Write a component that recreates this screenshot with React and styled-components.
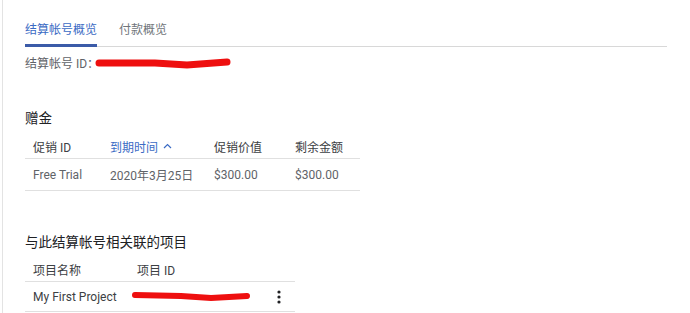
import React from "react";
import styled, { createGlobalStyle } from "styled-components";

const GlobalStyle = createGlobalStyle`
  html, body {
    margin: 0;
    padding: 0;
    background: #fff;
  }
  body {
    font-family: Roboto, "Noto Sans CJK SC", sans-serif;
    color: #5f6368;
  }
`;

const Page = styled.div`
  width: 690px;
  height: 313px;
  overflow: hidden;
  box-sizing: border-box;
  padding-left: 2px;
`;

const Panel = styled.div`
  height: 100%;
  border-left: 1px solid #e3e3e3;
  padding: 0 23px 0 22px;
`;

const Tabs = styled.div`
  display: flex;
  gap: 22px;
  padding-top: 21px;
  border-bottom: 1px solid #d8d8d8;
  width: 642px;
`;

const Tab = styled.div`
  font-size: 12px;
  line-height: 18px;
  padding-bottom: 5px;
  margin-bottom: -1px;
  color: ${(p) => (p.$active ? "#3b6bc4" : "#70757a")};
  border-bottom: 3px solid ${(p) => (p.$active ? "#3b5ba8" : "transparent")};
`;

const IdLine = styled.div`
  display: flex;
  align-items: center;
  font-size: 12px;
  margin-top: 6px;
  height: 18px;
  color: #5f6368;
`;

const Heading = styled.div`
  font-size: 13.5px;
  color: #202124;
  margin-top: ${(p) => p.$top}px;
  line-height: 18px;
`;

const Table = styled.div`
  width: ${(p) => p.$width}px;
  margin-top: ${(p) => p.$top}px;
`;

const Row = styled.div`
  display: grid;
  grid-template-columns: ${(p) => p.$cols};
  align-items: center;
  padding-left: 8px;
  height: ${(p) => p.$h}px;
  border-bottom: 1px solid #e0e0e0;
  font-size: 12px;
  color: ${(p) => (p.$head ? "#3c4043" : "#5f6368")};
`;

const SortCell = styled.span`
  color: #3b6bc4;
  display: flex;
  align-items: center;
  gap: 5px;
`;

const DarkCell = styled.span`
  color: #3c4043;
`;

const Redacted = styled.span`
  display: flex;
  align-items: center;
  margin-left: ${(p) => p.$shift}px;
`;

const Kebab = styled.span`
  display: flex;
  justify-content: center;
  color: #202124;
`;

const Scribble = ({ width, d, w = 6 }) => (
  <svg width={width} height="14" viewBox={`0 0 ${width} 14`}>
    <path d={d} stroke="#ee0f0f" strokeWidth={w} strokeLinecap="round" fill="none" />
  </svg>
);

const promoCols = "77px 104px 81px 65px";
const projCols = "104px 130px 24px";

export default function App() {
  return (
    <>
      <GlobalStyle />
      <Page>
        <Panel>
          <Tabs>
            <Tab $active>结算帐号概览</Tab>
            <Tab>付款概览</Tab>
          </Tabs>
          <IdLine>
            结算帐号 ID：
            <Redacted $shift={-4}>
              <Scribble width={136} w={7} d="M4 8 L60 8 L92 10 L132 7" />
            </Redacted>
          </IdLine>

          <Heading $top={38}>赠金</Heading>
          <Table $width={335} $top={7}>
            <Row $cols={promoCols} $h={24} $head>
              <span>促销 ID</span>
              <SortCell>
                到期时间
                <svg width="9" height="6" viewBox="0 0 9 6">
                  <path d="M1 5 L4.5 1.5 L8 5" stroke="#3b6bc4" strokeWidth="1.2" fill="none" />
                </svg>
              </SortCell>
              <span>促销价值</span>
              <span>剩余金额</span>
            </Row>
            <Row $cols={promoCols} $h={31}>
              <span>Free Trial</span>
              <span>2020年3月25日</span>
              <span>$300.00</span>
              <span>$300.00</span>
            </Row>
          </Table>

          <Heading $top={42}>与此结算帐号相关联的项目</Heading>
          <Table $width={270} $top={6}>
            <Row $cols={projCols} $h={24} $head>
              <span>项目名称</span>
              <span>项目 ID</span>
              <span />
            </Row>
            <Row $cols={projCols} $h={29}>
              <DarkCell>My First Project</DarkCell>
              <Redacted $shift={-6}>
                <Scribble width={120} d="M4 5 L50 6 L80 8 L116 6" />
              </Redacted>
              <Kebab>
                <svg width="4" height="14" viewBox="0 0 4 14">
                  <circle cx="2" cy="2" r="1.6" fill="#202124" />
                  <circle cx="2" cy="7" r="1.6" fill="#202124" />
                  <circle cx="2" cy="12" r="1.6" fill="#202124" />
                </svg>
              </Kebab>
            </Row>
          </Table>
        </Panel>
      </Page>
    </>
  );
}
